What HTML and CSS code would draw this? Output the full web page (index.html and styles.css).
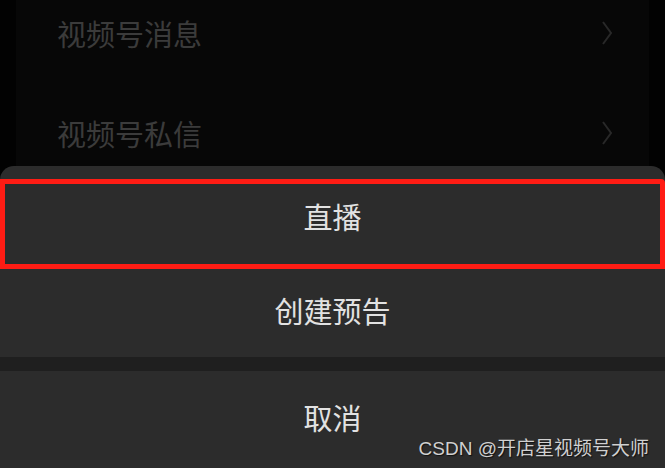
FILE: index.html
```html
<!DOCTYPE html>
<html>
  <head>
    <meta charset="UTF-8" />
    <meta name="viewport" content="width=device-width, initial-scale=1.0" />
    <title>直播</title>
    <link rel="stylesheet" href="styles.css">
  </head>

  <body>
    <div class="page">
      <div class="list">
        <div class="list-item">
          <span>视频号消息</span>
          <svg class="chevron" width="12" height="24" viewBox="0 0 12 24">
            <polyline points="2,1 10,12 2,23" />
          </svg>
        </div>
        <div class="list-item">
          <span>视频号私信</span>
          <svg class="chevron" width="12" height="24" viewBox="0 0 12 24">
            <polyline points="2,1 10,12 2,23" />
          </svg>
        </div>
      </div>

      <div class="sheet">
        <div class="sheet-item selected">直播</div>
        <div class="sheet-item">创建预告</div>
        <div class="sheet-gap"></div>
        <div class="sheet-item cancel">取消</div>
      </div>

      <div class="watermark">CSDN @开店星视频号大师</div>
    </div>
  </body>
</html>
```

FILE: styles.css
```css
body {
  margin: 0;
  background-color: #020202;
  font-family: "Noto Sans CJK SC", "Noto Sans", sans-serif;
  overflow: hidden;
}

.page {
  position: relative;
  width: 665px;
  height: 468px;
  overflow: hidden;
}

.list {
  height: 166px;
  margin: 0 16px;
  background-color: #070707;
  overflow: hidden;
}

.list-item {
  display: flex;
  align-items: center;
  justify-content: space-between;
  height: 100px;
  padding: 0 36px 0 41px;
  font-size: 29px;
  color: #3b3b3b;
}

.list-item:first-child {
  margin-top: -17px;
}

.chevron polyline {
  fill: none;
  stroke: #282828;
  stroke-width: 2;
}

.sheet {
  background-color: #2c2c2c;
  border-radius: 14px 14px 0 0;
  padding-top: 13px;
  height: 289px;
}

.sheet-item {
  display: flex;
  align-items: center;
  justify-content: center;
  height: 82px;
  padding-bottom: 6px;
  font-size: 29px;
  color: #e2e2e2;
}

.sheet-item.selected {
  height: 64px;
  padding-bottom: 16px;
  border: 5px solid #ff1c14;
  border-radius: 0 4px 0 0;
}

.sheet-gap {
  height: 14px;
  background-color: #1f1f1f;
}

.cancel {
  height: 92px;
}

.watermark {
  position: absolute;
  right: 16px;
  bottom: 8px;
  font-family: "Liberation Sans", "Noto Sans CJK SC", sans-serif;
  font-size: 19px;
  color: #d0d0d0;
  text-shadow: 1px 1px 1px #111;
}
```
